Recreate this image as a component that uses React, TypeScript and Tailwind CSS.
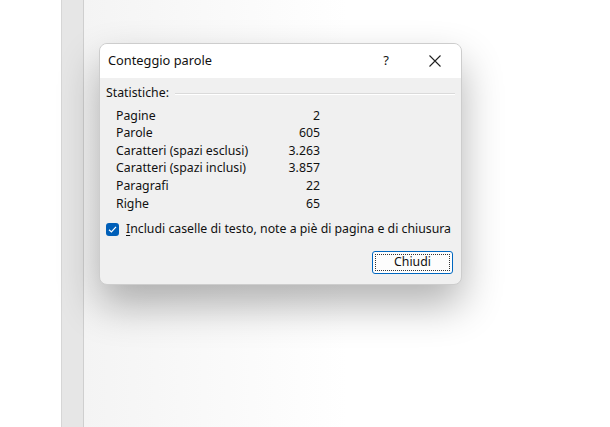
import React from "react";

const stats: { label: string; value: string }[] = [
  { label: "Pagine", value: "2" },
  { label: "Parole", value: "605" },
  { label: "Caratteri (spazi esclusi)", value: "3.263" },
  { label: "Caratteri (spazi inclusi)", value: "3.857" },
  { label: "Paragrafi", value: "22" },
  { label: "Righe", value: "65" },
];

export default function App() {
  return (
    <div
      className="flex h-[427px] w-[610px] overflow-hidden bg-white text-[12.3px] text-[#111]"
      style={{ fontFamily: '"Noto Sans", "Open Sans", sans-serif' }}
    >
      {/* left margin */}
      <div className="w-[61px] shrink-0 bg-white" />
      {/* ruler strip */}
      <div className="w-[23px] shrink-0 border-l border-r border-l-[#d6d6d6] border-r-[#cfcfcf] bg-[#e6e6e6]" />

      {/* page area */}
      <div className="flex-1 bg-gradient-to-r from-[#f4f4f4] via-white to-white pl-[15px] pt-[43px]">
        <div className="flex w-[363px] flex-col overflow-hidden rounded-lg border border-[#cdcdcd] bg-[#f0f0f0] shadow-[0_20px_40px_rgba(0,0,0,0.3)]">
          {/* title bar */}
          <div className="flex h-[34px] items-center bg-white pl-[8px]">
            <span className="flex-1 text-[12.8px]">Conteggio parole</span>
            <span className="w-[20px] text-center text-[13px]">?</span>
            <span className="ml-[29px] mr-[16px] flex w-[20px] items-center justify-center">
              <svg width="12" height="12" viewBox="0 0 12 12" fill="none" stroke="#222" strokeWidth="1.1">
                <path d="M0.5 0.5 L11.5 11.5 M11.5 0.5 L0.5 11.5" />
              </svg>
            </span>
          </div>

          {/* body */}
          <div className="flex flex-col px-[6px] pt-[7px] pb-[10px]">
            <div className="flex h-[17px] items-center gap-[6px]">
              <span>Statistiche:</span>
              <div className="flex-1 border-t border-b border-t-[#dadada] border-b-white" />
            </div>

            <div className="mt-[5px] flex w-[214px] flex-col pl-[10px]">
              {stats.map((s) => (
                <div key={s.label} className="flex h-[17.6px] items-center justify-between">
                  <span>{s.label}</span>
                  <span>{s.value}</span>
                </div>
              ))}
            </div>

            <div className="mt-[8px] flex h-[18px] items-center gap-[7px]">
              <span className="flex h-[13px] w-[13px] items-center justify-center rounded-[3px] bg-[#005fb8]">
                <svg width="9" height="9" viewBox="0 0 9 9" fill="none" stroke="white" strokeWidth="1.2">
                  <path d="M1 4.8 L3.4 7 L8 1.8" />
                </svg>
              </span>
              <span>
                <span className="underline underline-offset-2">I</span>ncludi caselle di testo, note a piè di pagina e di chiusura
              </span>
            </div>

            <div className="mt-[12px] flex justify-end pr-[2px]">
              <button className="flex h-[23px] w-[81px] items-center justify-center rounded-[3px] border border-[#0067c0] bg-[#fdfdfd] p-[2px]">
                <span className="flex h-full w-full items-center justify-center border border-dotted border-[#333]">
                  Chiudi
                </span>
              </button>
            </div>
          </div>
        </div>
      </div>
    </div>
  );
}
